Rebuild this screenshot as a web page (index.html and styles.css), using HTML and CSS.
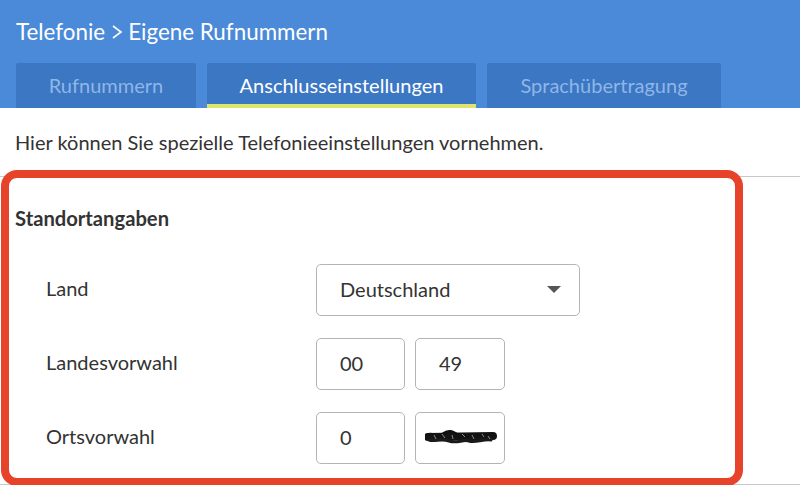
FILE: index.html
```html
<!DOCTYPE html>
<html lang="de">
<head>
<meta charset="utf-8">
<title>Telefonie – Eigene Rufnummern</title>
<link rel="stylesheet" href="styles.css">
</head>
<body>
<header class="top">
  <h1 class="crumb">Telefonie<svg class="sep" width="20" height="14" viewBox="0 0 20 14" aria-hidden="true"><polyline points="6,1 14,7 6,13" fill="none" stroke="#fff" stroke-width="1.6"/></svg>Eigene Rufnummern</h1>
  <nav class="tabs">
    <a class="tab tab-1">Rufnummern</a>
    <a class="tab tab-2 active">Anschlusseinstellungen</a>
    <a class="tab tab-3">Sprachübertragung</a>
  </nav>
</header>
<main class="content">
  <p class="intro">Hier können Sie spezielle Telefonieeinstellungen vornehmen.</p>
  <section class="group">
    <h2 class="group-title">Standortangaben</h2>
    <div class="form">
      <label class="lbl">Land</label>
      <div class="ctrl">
        <div class="select"><span>Deutschland</span><span class="caret"></span></div>
      </div>
      <label class="lbl">Landesvorwahl</label>
      <div class="ctrl">
        <div class="box">00</div>
        <div class="box">49</div>
      </div>
      <label class="lbl">Ortsvorwahl</label>
      <div class="ctrl">
        <div class="box">0</div>
        <div class="box redacted">
          <svg width="72" height="16" viewBox="0 0 72 16" aria-hidden="true">
            <path d="M3 8 L68 7" stroke="#141414" stroke-width="8" stroke-linecap="round"/>
            <path d="M2 6 C8 3 12 10 18 5 S28 3 34 7 S46 3 52 6 S62 4 69 6" fill="none" stroke="#111" stroke-width="3" stroke-linecap="round"/>
            <path d="M4 11 C10 13 16 9 24 12 S38 10 44 12 S58 10 66 11" fill="none" stroke="#1a1a1a" stroke-width="3" stroke-linecap="round"/>
            <path d="M9 6 l2 4 M17 5 l3 4 M27 6 l1 4 M37 5 l3 3 M47 6 l2 4 M57 5 l2 3 M63 7 l2 3" stroke="#8a8a8a" stroke-width="1"/>
          </svg>
        </div>
      </div>
    </div>
    <div class="mark"></div>
  </section>
</main>
</body>
</html>
```

FILE: styles.css
```css
* { box-sizing: border-box; }
html, body { margin: 0; padding: 0; background: #fff; }
body {
  font-family: Lato, "Open Sans", "Liberation Sans", sans-serif;
  color: #333;
  overflow: hidden;
}
.top {
  background: #4a8ad8;
  height: 108px;
  display: flex;
  flex-direction: column;
}
.crumb {
  margin: 0;
  height: 63px;
  padding-left: 16px;
  display: flex;
  align-items: center;
  font-size: 22.4px;
  font-weight: 400;
  color: #fff;
  white-space: pre;
}
.sep { margin: 0 1px 0 2px; flex: none; }
.tabs {
  display: flex;
  gap: 11px;
  padding-left: 16px;
  height: 45px;
}
.tab {
  background: #3c77c4;
  color: #8fb6e6;
  font-size: 20px;
  display: flex;
  align-items: center;
  justify-content: center;
  border-radius: 2px 2px 0 0;
  padding-bottom: 2px;
}
.tab-1 { width: 180px; }
.tab-2 { width: 269px; }
.tab-3 { width: 234px; }
.tab.active {
  color: #fff;
  border-bottom: 4px solid #dfe46c;
  padding-bottom: 0;
  padding-top: 2px;
}
.content { padding: 0; }
.intro {
  margin: 0;
  padding: 22px 15px;
  line-height: 24px;
  font-size: 20px;
  color: #333;
}
.group {
  position: relative;
  border-top: 1px solid #c9c9c9;
  border-bottom: 1px solid #c9c9c9;
  padding: 29px 0 20px 15px;
}
.group-title {
  margin: 0 0 34px;
  line-height: 24px;
  font-size: 20.2px;
  font-weight: 700;
  color: #333;
}
.form {
  display: grid;
  grid-template-columns: 270px auto;
  row-gap: 22px;
  padding-left: 31px;
}
.lbl {
  font-size: 20px;
  color: #333;
  display: flex;
  align-items: center;
  height: 52px;
  padding-bottom: 4px;
}
.ctrl { display: flex; gap: 10px; }
.select, .box {
  height: 52px;
  border: 1px solid #b4b4b4;
  border-radius: 5px;
  background: #fff;
  display: flex;
  align-items: center;
  font-size: 20px;
  color: #333;
  padding-bottom: 2px;
}
.select {
  width: 264px;
  padding-left: 23px;
  padding-right: 18px;
  justify-content: space-between;
}
.caret {
  width: 0; height: 0;
  border-left: 7px solid transparent;
  border-right: 7px solid transparent;
  border-top: 7px solid #555;
}
.box { width: 89px; padding-left: 23px; }
.box + .box { width: 90px; }
.redacted { padding-left: 9px; }
.mark {
  position: absolute;
  left: 1px;
  top: -7px;
  width: 742px;
  height: 316px;
  border: 8px solid #e6432a;
  border-radius: 16px;
  pointer-events: none;
}
```
